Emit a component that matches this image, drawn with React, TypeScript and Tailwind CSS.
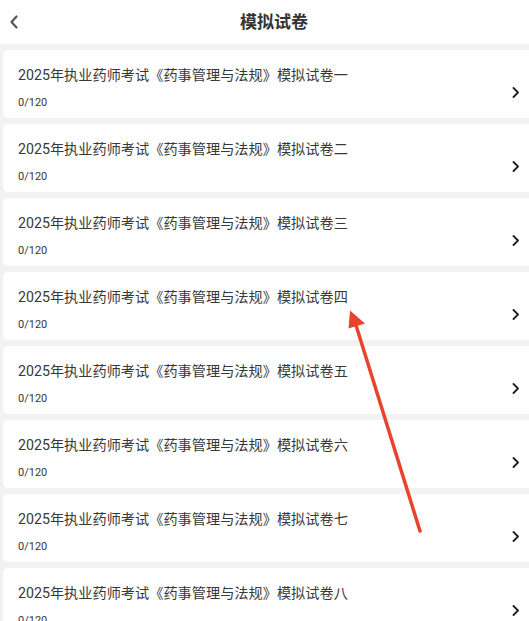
const numerals = ["一", "二", "三", "四", "五", "六", "七", "八"];

const papers = numerals.map((n) => ({
  title: `2025年执业药师考试《药事管理与法规》模拟试卷${n}`,
  progress: "0/120",
}));

const ChevronLeft = () => (
  <svg width="10" height="14" viewBox="0 0 10 14" fill="none">
    <path d="M7.5 1.5 L2.5 7 L7.5 12.5" stroke="#555" strokeWidth="2.2" strokeLinecap="round" strokeLinejoin="round" />
  </svg>
);

const ChevronRight = () => (
  <svg width="8" height="11" viewBox="0 0 8 11" fill="none">
    <path d="M1.5 1 L6 5.5 L1.5 10" stroke="#1f1f1f" strokeWidth="1.8" strokeLinecap="round" strokeLinejoin="round" />
  </svg>
);

const App = () => {
  return (
    <div
      className="relative w-[529px] h-[621px] overflow-hidden bg-[#f2f2f2] text-[#333]"
      style={{ fontFamily: 'Roboto, "Noto Sans CJK SC", sans-serif' }}
    >
      {/* Header */}
      <div className="h-[44px] bg-white flex items-center">
        <div className="w-[28px] pl-[9px] flex items-center">
          <ChevronLeft />
        </div>
        <div className="flex-1 flex justify-center pr-[9px]">
          <h1 className="text-[17px] leading-[22px] font-bold text-[#333] -mt-[1px]">模拟试卷</h1>
        </div>
      </div>

      {/* List */}
      <div className="flex flex-col gap-[6px] pt-[6px] pl-[3px]">
        {papers.map((p, i) => (
          <div key={i} className="h-[68px] shrink-0 bg-white rounded-l-[5px] flex pl-[15px] pr-[9px]">
            <div className="flex-1 flex flex-col pt-[15px]">
              <div className="text-[14.2px] leading-[20px] text-[#383838]">{p.title}</div>
              <div className="text-[11px] leading-[16px] text-[#383838] mt-[10px]">{p.progress}</div>
            </div>
            <div className="pt-[37px]">
              <ChevronRight />
            </div>
          </div>
        ))}
      </div>

      {/* Annotation arrow */}
      <svg className="absolute left-0 top-0 pointer-events-none" width="529" height="621" viewBox="0 0 529 621">
        <line x1="420" y1="531" x2="355" y2="322" stroke="#e8432d" strokeWidth="3.5" strokeLinecap="round" />
        <polygon points="350,310.5 365,323.5 348.5,328.5" fill="#e8432d" />
      </svg>
    </div>
  );
};

export default App;
